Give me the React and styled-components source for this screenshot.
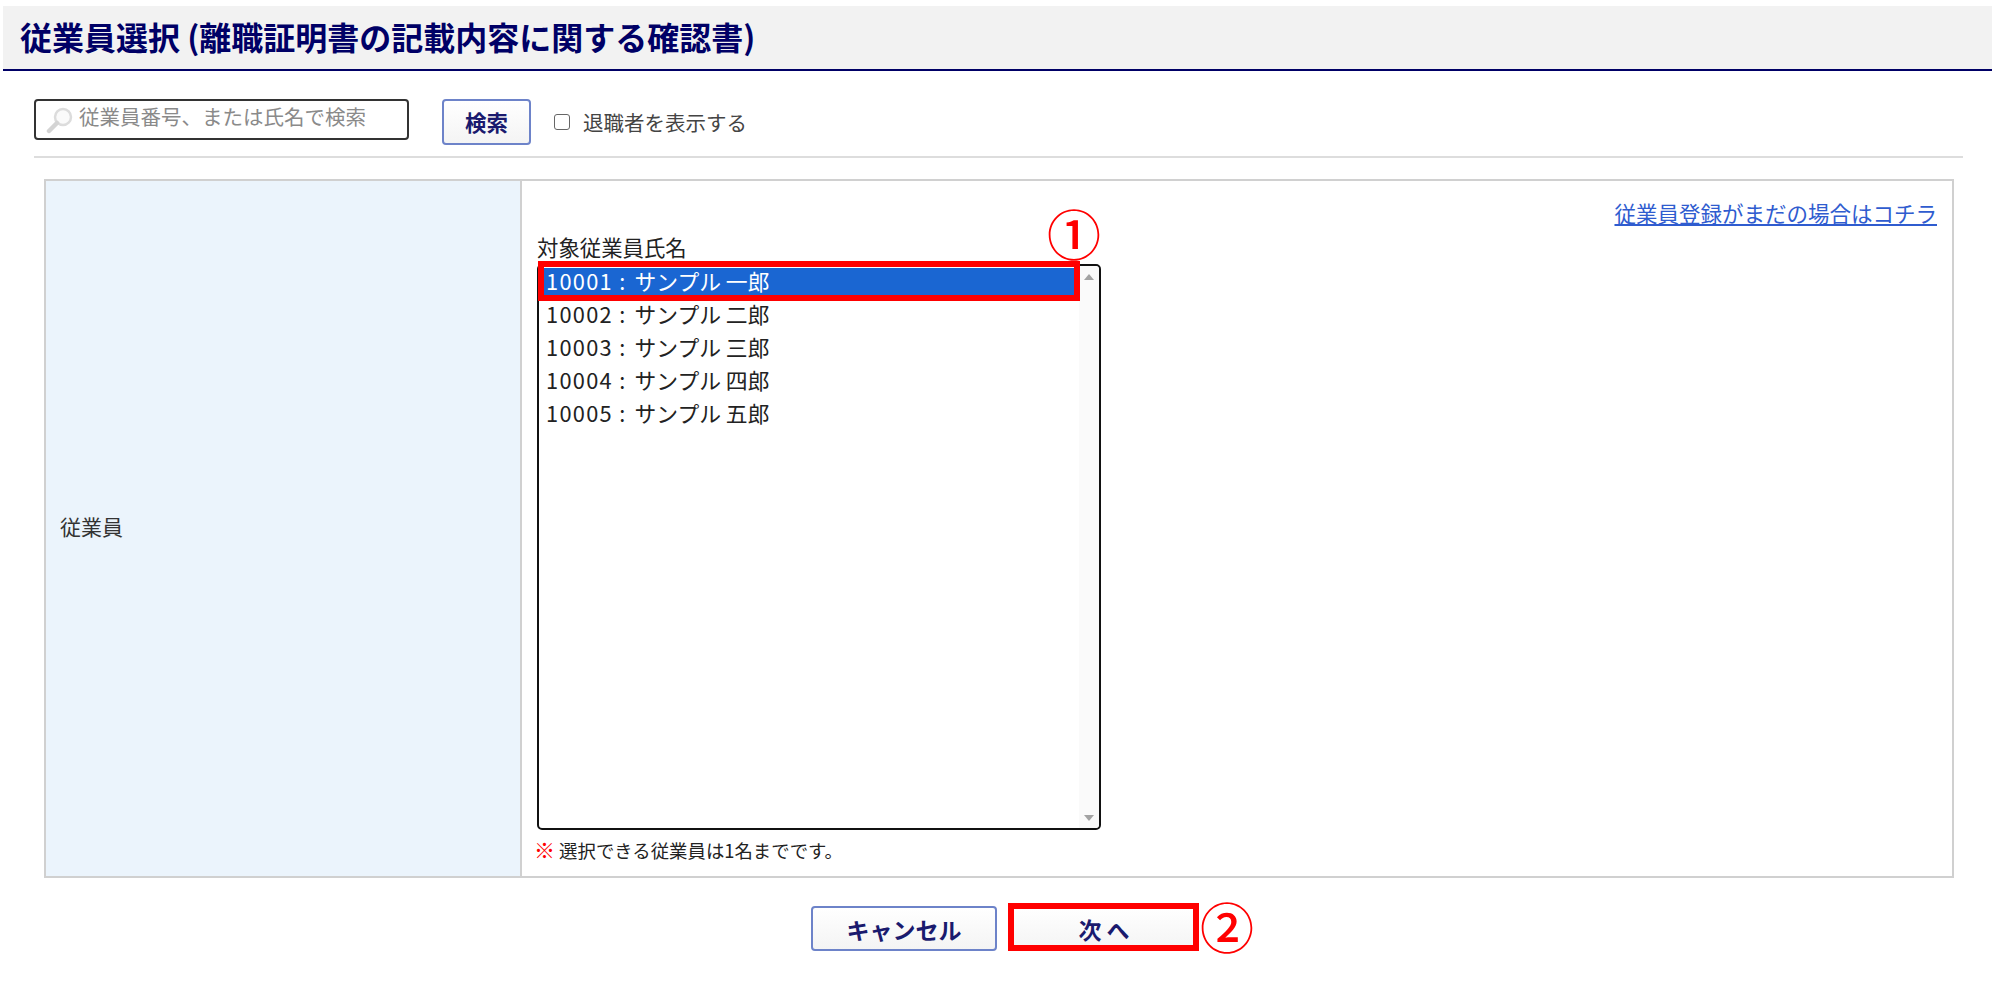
import React from 'react';
import styled, { createGlobalStyle } from 'styled-components';

const FONT = `"Noto Sans CJK JP", "Noto Sans", "Liberation Sans", sans-serif`;

const GlobalStyle = createGlobalStyle`
    html, body {
        margin: 0;
        background: #fff;
    }
    body {
        font-family: ${FONT};
        color: #333;
    }
    * {
        box-sizing: border-box;
    }
`;

const Page = styled.div`
    width: 1997px;
    height: 987px;
    padding: 6px 5px 0 3px;
    overflow: hidden;
`;

const Header = styled.header`
    height: 65px;
    display: flex;
    align-items: center;
    padding: 0 0 4px 17px;
    background: #f2f2f2;
    border-bottom: 2px solid #000066;
`;

const Title = styled.h1`
    margin: 0;
    font-size: 32px;
    line-height: 1;
    font-weight: 700;
    color: #000066;
`;

const Toolbar = styled.div`
    height: 59px;
    margin: 28px 29px 0 31px;
    display: flex;
    align-items: flex-start;
    border-bottom: 2px solid #ddd;
`;

const SearchBox = styled.div`
    width: 375px;
    height: 41px;
    display: flex;
    align-items: center;
    gap: 5px;
    padding: 0 8px 0 10px;
    border: 2px solid #333;
    border-radius: 4px;
    font-size: 20.5px;
    color: #8a8a8a;
`;

const Placeholder = styled.span`
    line-height: 28px;
    margin-bottom: 8px;
`;

const SearchButton = styled.button`
    margin-left: 33px;
    width: 89px;
    height: 46px;
    padding: 0 0 2px;
    border: 2px solid #6d83c9;
    border-radius: 4px;
    background: linear-gradient(#fff, #f4f4f4);
    font-family: ${FONT};
    font-size: 21.5px;
    font-weight: 700;
    color: #1a1a6e;
`;

const CheckRow = styled.label`
    margin: 9px 0 0 23px;
    display: flex;
    align-items: center;
    gap: 13px;
    font-size: 20.5px;
    line-height: 28px;
    color: #444;
`;

const CheckBox = styled.span`
    width: 16px;
    height: 16px;
    border: 1.5px solid #666;
    border-radius: 3px;
    background: #fff;
`;

const Table = styled.section`
    margin: 21px 38px 0 41px;
    height: 699px;
    display: grid;
    grid-template-columns: 476px 1fr;
    border: 2px solid #d0d0d0;
`;

const HeadCell = styled.div`
    display: flex;
    align-items: center;
    padding: 0 0 5px 14px;
    background: #ebf4fc;
    border-right: 2px solid #d0d0d0;
    font-size: 21px;
    color: #333;
`;

const BodyCell = styled.div`
    position: relative;
    padding: 16px 15px 0 15px;
    display: flex;
    flex-direction: column;
`;

const RegisterLink = styled.a`
    align-self: flex-end;
    font-size: 21.5px;
    line-height: 32px;
    color: #2f5ccf;
    text-decoration: underline;
`;

const FieldLabel = styled.div`
    font-size: 21.4px;
    line-height: 35px;
    color: #222;
`;

const ListWrap = styled.div`
    position: relative;
    width: 564px;
`;

const List = styled.ul`
    list-style: none;
    margin: 0;
    height: 566px;
    padding: 2px 24px 0 5px;
    position: relative;
    border: 2px solid #111;
    border-radius: 5px;
    background: #fff;
`;

const Option = styled.li`
    height: 33px;
    padding-left: 2px;
    font-size: 21.8px;
    line-height: 25px;
    white-space: pre;
    color: ${({ $selected }) => ($selected ? '#fff' : '#222')};
    background: ${({ $selected }) => ($selected ? '#1a66d2' : 'transparent')};
`;

const OptionCode = styled.span`
    letter-spacing: 1.3px;
    margin-right: 3px;
`;

const ScrollTrack = styled.div`
    position: absolute;
    top: 0;
    right: 0;
    bottom: 0;
    width: 20px;
    background: #fafafa;
    border-radius: 0 4px 4px 0;
`;

const Arrow = styled.span`
    position: absolute;
    left: 5px;
    ${({ $down }) => ($down ? 'bottom: 7px;' : 'top: 8px;')}
    border-left: 5px solid transparent;
    border-right: 5px solid transparent;
    ${({ $down }) => ($down ? 'border-top' : 'border-bottom')}: 6px solid #a3a3a3;
`;

const RedFrame = styled.div`
    position: absolute;
    border: 6px solid #ff0000;
    pointer-events: none;
`;

const SelectFrame = styled(RedFrame)`
    left: 1px;
    top: -3px;
    width: 542px;
    height: 40px;
`;

const NextFrame = styled(RedFrame)`
    left: -3px;
    top: -3px;
    right: -2px;
    bottom: 0;
`;

const Mark = styled.span`
    position: absolute;
    font-size: 54px;
    line-height: 54px;
    font-weight: 500;
    color: #ff0000;
`;

const MarkOne = styled(Mark)`
    left: 510px;
    top: -58px;
`;

const MarkTwo = styled(Mark)`
    left: 189px;
    top: -7px;
`;

const Note = styled.p`
    margin: 6px 0 0;
    font-size: 18.4px;
    line-height: 26px;
    color: #222;
    white-space: pre;
`;

const NoteMark = styled.span`
    margin-left: -3px;
    font-size: 21px;
    color: #ff0000;
    font-weight: 700;
`;

const Actions = styled.div`
    margin-top: 28px;
    padding-left: 13px;
    display: flex;
    justify-content: center;
    gap: 14px;
`;

const ActionWrap = styled.div`
    position: relative;
`;

const ActionButton = styled.button`
    width: 186px;
    height: 45px;
    padding: 0;
    display: block;
    border: 2px solid #6d83c9;
    border-radius: 4px;
    background: linear-gradient(#fff, #f4f4f4);
    font-family: ${FONT};
    font-size: 23px;
    font-weight: 700;
    color: #1a1a6e;
`;

const SearchIcon = () => (
    <svg width="28" height="28" viewBox="0 0 28 28" fill="none" style={{ flex: 'none' }}>
        <circle cx="17" cy="11" r="8" stroke="#dcdcdc" strokeWidth="2.5" fill="#fafafa" />
        <path d="M11 17 L3 25" stroke="#d4d4d4" strokeWidth="4.5" strokeLinecap="round" />
    </svg>
);

const employees = [
    ['10001', 'サンプル 一郎'],
    ['10002', 'サンプル 二郎'],
    ['10003', 'サンプル 三郎'],
    ['10004', 'サンプル 四郎'],
    ['10005', 'サンプル 五郎'],
];

export default function App() {
    return (
        <Page>
            <GlobalStyle />
            <Header>
                <Title>従業員選択 (離職証明書の記載内容に関する確認書)</Title>
            </Header>
            <Toolbar>
                <SearchBox>
                    <SearchIcon />
                    <Placeholder>従業員番号、または氏名で検索</Placeholder>
                </SearchBox>
                <SearchButton>検索</SearchButton>
                <CheckRow>
                    <CheckBox />
                    退職者を表示する
                </CheckRow>
            </Toolbar>
            <Table>
                <HeadCell>従業員</HeadCell>
                <BodyCell>
                    <RegisterLink>従業員登録がまだの場合はコチラ</RegisterLink>
                    <FieldLabel>対象従業員氏名</FieldLabel>
                    <ListWrap>
                        <List>
                            {employees.map(([code, name], i) => (
                                <Option key={code} $selected={i === 0}>
                                    <OptionCode>{code} :</OptionCode> {name}
                                </Option>
                            ))}
                            <ScrollTrack>
                                <Arrow />
                                <Arrow $down />
                            </ScrollTrack>
                        </List>
                        <SelectFrame />
                        <MarkOne>①</MarkOne>
                    </ListWrap>
                    <Note><NoteMark>※</NoteMark> 選択できる従業員は1名までです。</Note>
                </BodyCell>
            </Table>
            <Actions>
                <ActionButton>キャンセル</ActionButton>
                <ActionWrap>
                    <ActionButton>次 へ</ActionButton>
                    <NextFrame />
                    <MarkTwo>②</MarkTwo>
                </ActionWrap>
            </Actions>
        </Page>
    );
}
